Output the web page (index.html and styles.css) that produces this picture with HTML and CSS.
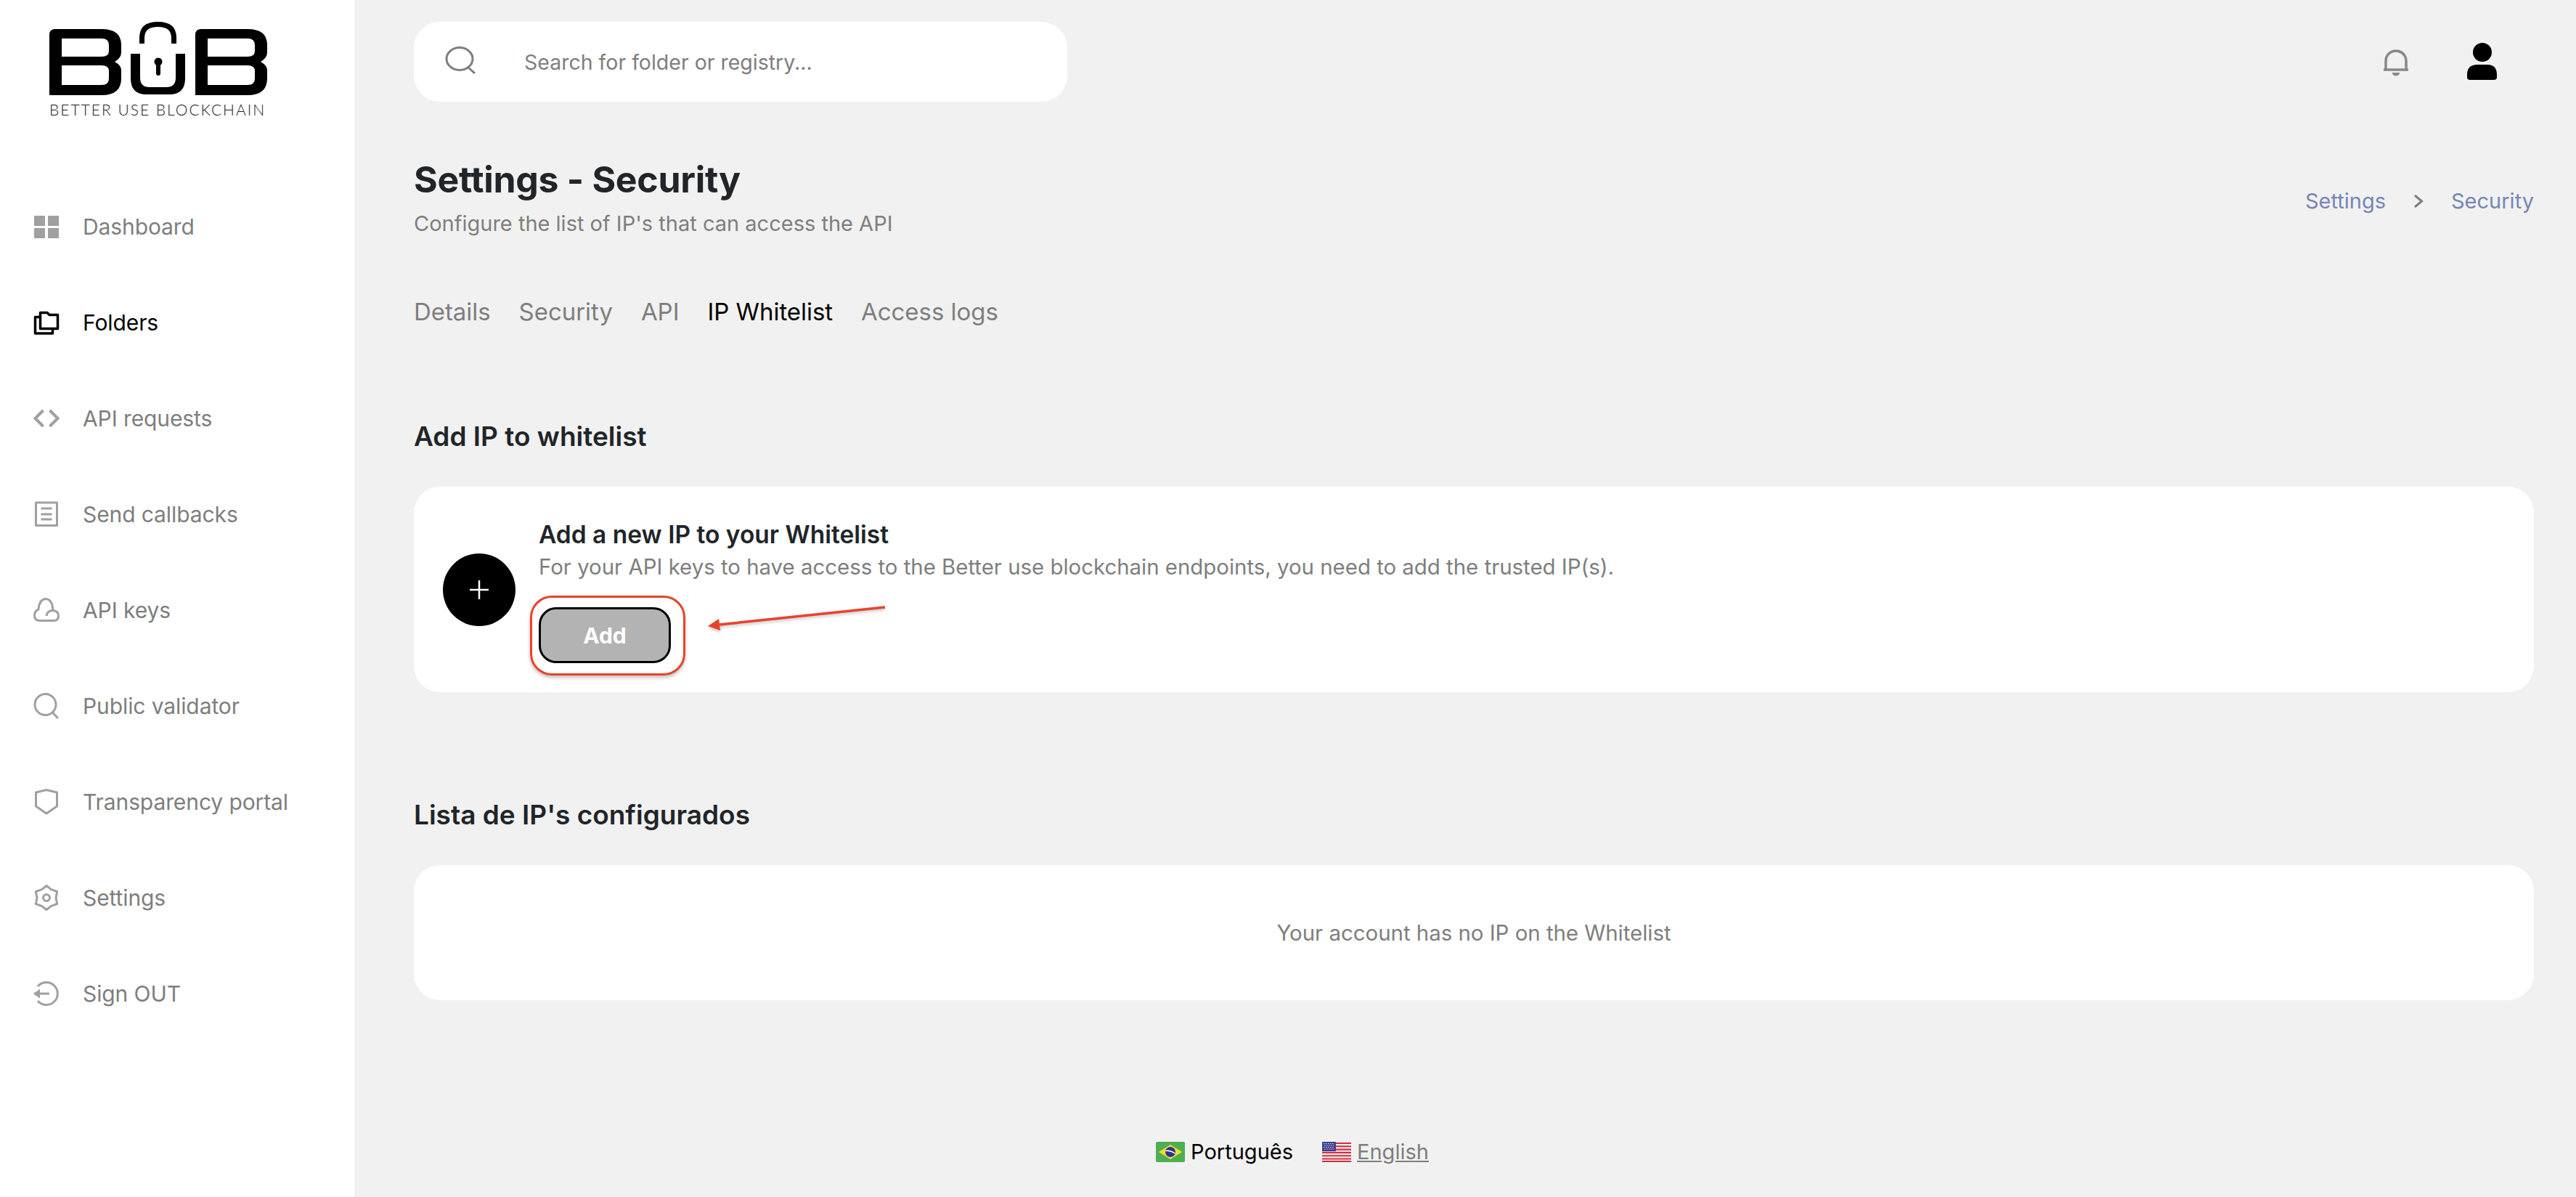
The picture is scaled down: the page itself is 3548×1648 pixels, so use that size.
FILE: index.html
```html
<!DOCTYPE html>
<html lang="en">
<head>
<meta charset="utf-8">
<title>Settings - Security</title>
<link rel="stylesheet" href="styles.css">
</head>
<body>
<div class="app">
  <aside class="sidebar">
    <div class="logo">
      <svg class="logo-mark" viewBox="68 28 300 104" width="300" height="104">
        <path fill-rule="evenodd" d="M68 131V48Q68 40 76 40H140Q167 40 167 62V72Q167 80 158 85Q167 90 167 97V108Q167 131 140 131ZM85 53V78H140Q150 78 150 70V62Q150 53 140 53ZM85 90V117H140Q150 117 150 108V98Q150 90 140 90Z"/>
        <path fill-rule="evenodd" d="M269 131V48Q269 40 277 40H341Q368 40 368 62V72Q368 80 359 85Q368 90 368 97V108Q368 131 341 131ZM286 53V78H341Q351 78 351 70V62Q351 53 341 53ZM286 90V117H341Q351 117 351 108V98Q351 90 341 90Z"/>
        <path d="M180 74H193V107Q193 120 206 120H229Q242 120 242 107V74H255V108Q255 130 233 130H202Q180 130 180 108Z"/>
        <path d="M195.500 60V52Q195.500 33.500 217.500 33.500Q239.500 33.500 239.500 52V60" fill="none" stroke="#000" stroke-width="7"/>
        <circle cx="218" cy="85" r="5.500"/>
        <path d="M218 85V101" stroke="#000" stroke-width="6" stroke-linecap="round"/>
      </svg>
      <div class="logo-text">BETTER USE BLOCKCHAIN</div>
    </div>
    <nav class="nav">
      <a class="nav-item"><svg class="nav-icon" viewBox="0 0 36 36"><path class="fill" d="M1 3H16V17H1ZM20 3H35V17H20ZM1 20H16V34H1ZM20 20H35V34H20Z"/></svg><span>Dashboard</span></a>
      <a class="nav-item active"><svg class="nav-icon" viewBox="0 0 36 36"><path class="line" d="M9.500 26.500V4.500H19L22 7.500H33.500V26.500ZM9.500 10.500H2.500V33H26.500V26.500"/></svg><span>Folders</span></a>
      <a class="nav-item"><svg class="nav-icon" viewBox="0 0 36 36"><path class="line wide" d="M13.500 7L2.500 18L13.500 29M22.500 7L33.500 18L22.500 29"/></svg><span>API requests</span></a>
      <a class="nav-item"><svg class="nav-icon" viewBox="0 0 36 36"><path class="line" d="M3.500 2H32.500V33.500H3.500ZM10.500 10H25.500M10.500 18H25.500M10.500 25H25.500"/></svg><span>Send callbacks</span></a>
      <a class="nav-item"><svg class="nav-icon" viewBox="0 0 36 36"><path class="line" d="M9 32.500H28Q34.500 32.500 34.500 26Q34.500 19 27 18.500Q26 3 17 2.500Q8 3 7 17Q1.500 19 1.500 25.500Q1.500 32.500 9 32.500ZM18 26Q19 18.500 27 18.500"/></svg><span>API keys</span></a>
      <a class="nav-item"><svg class="nav-icon" viewBox="0 0 36 36"><circle class="line" cx="16.500" cy="16" r="14.500"/><path class="line" d="M26 26.500L34 35"/></svg><span>Public validator</span></a>
      <a class="nav-item"><svg class="nav-icon" viewBox="0 0 36 36"><path class="line" d="M18 1.500L32.500 5V24L18 34L3.500 24V5Z"/></svg><span>Transparency portal</span></a>
      <a class="nav-item"><svg class="nav-icon" viewBox="0 0 36 36"><path class="line" d="M18 1.500L24.500 6.700L32.700 9.500L31 18L32.700 26.500L24.500 29.300L18 34.500L11.500 29.300L3.300 26.500L5 18L3.300 9.500L11.500 6.700Z"/><circle class="line" cx="18" cy="18" r="4.500"/></svg><span>Settings</span></a>
      <a class="nav-item"><svg class="nav-icon" viewBox="0 0 36 36"><path class="line" d="M6 8A15.500 15.500 0 1 1 6 28M1 18H22"/><path class="fill" d="M0 18L9 11.500V24.500Z"/></svg><span>Sign OUT</span></a>
    </nav>
  </aside>

  <main class="main">
    <header class="topbar">
      <div class="search">
        <svg class="search-icon" viewBox="0 0 42 38"><ellipse cx="20" cy="17" rx="18" ry="15.500" fill="none" stroke="#7e7e7e" stroke-width="3"/><path d="M31 28L41 37" stroke="#7e7e7e" stroke-width="3"/></svg>
        <span class="search-text">Search for folder or registry...</span>
      </div>
      <div class="top-icons">
        <svg class="bell" viewBox="0 0 36 38"><path d="M4 28V17A14 14 0 0 1 32 17V28" fill="none" stroke="#888" stroke-width="3.500"/><path d="M1 29H35" stroke="#888" stroke-width="3.500"/><path d="M12.500 33H23.500Q22 37.500 18 37.500Q14 37.500 12.500 33Z" fill="#888"/></svg>
        <svg class="user" viewBox="0 0 42 52"><circle cx="21" cy="13" r="13"/><path d="M0 44Q0 30 14 30H28Q41 30 41 44V47Q41 51 37 51H4Q0 51 0 47Z"/></svg>
      </div>
    </header>

    <section class="page-head">
      <div>
        <h1 class="page-title">Settings - Security</h1>
        <p class="page-sub">Configure the list of IP's that can access the API</p>
      </div>
      <div class="crumbs">
        <span>Settings</span>
        <svg class="crumb-sep" viewBox="0 0 14 20"><path d="M2 2L11.500 10L2 18" fill="none" stroke="#7e7e7e" stroke-width="3"/></svg>
        <span>Security</span>
      </div>
    </section>

    <div class="tabs">
      <a class="tab">Details</a>
      <a class="tab">Security</a>
      <a class="tab">API</a>
      <a class="tab active">IP Whitelist</a>
      <a class="tab">Access logs</a>
    </div>

    <h2 class="section-title first">Add IP to whitelist</h2>
    <section class="card add-card">
      <div class="plus">
        <svg viewBox="0 0 26 26" width="26" height="26"><path d="M13 0V26M0 13H26" stroke="#fff" stroke-width="2.500"/></svg>
      </div>
      <div class="add-body">
        <h3 class="add-title">Add a new IP to your Whitelist</h3>
        <p class="add-desc">For your API keys to have access to the Better use blockchain endpoints, you need to add the trusted IP(s).</p>
        <div class="highlight"><button class="add-btn">Add</button></div>
      </div>
      <svg class="arrow" viewBox="0 0 250 40" width="250" height="40"><path d="M248 3L20 27" stroke="#e8432a" stroke-width="3.500"/><path d="M4 29L19 19L21 35Z" fill="#e8432a"/></svg>
    </section>

    <h2 class="section-title second">Lista de IP's configurados</h2>
    <section class="card empty-card">Your account has no IP on the Whitelist</section>

    <footer class="langs">
      <a class="lang pt">
        <svg class="flag" viewBox="0 0 40 28"><rect width="40" height="28" rx="2" fill="#4caf50"/><path d="M20 4L36 14L20 24L4 14Z" fill="#fdd835"/><circle cx="20" cy="14" r="7" fill="#283593"/><path d="M13.500 12.500Q20 11.500 26.500 16" stroke="#fff" stroke-width="1.500" fill="none"/></svg>
        <span>Português</span>
      </a>
      <a class="lang en">
        <svg class="flag" viewBox="0 0 40 28"><rect width="40" height="28" rx="2" fill="#eceff1"/><path d="M0 2H40M0 6.300H40M0 10.600H40M0 14.900H40M0 19.200H40M0 23.500H40M0 27H40" stroke="#d32f3f" stroke-width="2.100"/><rect width="19" height="13" fill="#3f3f8f"/><path d="M2 2.500H17M3 5H16M2 7.500H17M3 10H16" stroke="#ddd" stroke-width="1.200" stroke-dasharray="1.500 1.500"/></svg>
        <span> English</span>
      </a>
    </footer>
  </main>
</div>
</body>
</html>
```
FILE: styles.css
```css
* { box-sizing: border-box; }
html, body { margin: 0; padding: 0; height: 100%; }
body { background: #f1f1f1; font-family: Inter, "Noto Sans", sans-serif; color: #7e7e7e; overflow: hidden; }
.app { display: flex; height: 1648px; }

.sidebar { width: 488px; flex: none; background: #fff; }
.logo { padding: 28px 0 0 68px; height: 246px; }
.logo-mark { display: block; }
.logo-text { margin-top: 6px; font-family: Lato, sans-serif; font-size: 21px; font-weight: 300; line-height: 26px; letter-spacing: 2px; color: #222; white-space: nowrap; }
.nav { display: flex; flex-direction: column; }
.nav-item { display: flex; align-items: center; height: 132px; padding-left: 46px; font-size: 30px; letter-spacing: -0.1px; color: #7e7e7e; }
.nav-item.active { color: #000; }
.nav-icon { width: 36px; height: 36px; margin-right: 32px; flex: none; overflow: visible; }
.fill { fill: #a0a0a0; }
.line { fill: none; stroke: #a0a0a0; stroke-width: 3; stroke-linejoin: round; }
.line.wide { stroke-width: 4; stroke-linejoin: miter; }
.active .line { stroke: #000; stroke-width: 3.500; }

.main { flex: 1; min-width: 0; padding: 30px 58px 0 82px; display: flex; flex-direction: column; }
.topbar { display: flex; justify-content: space-between; align-items: center; height: 110px; }
.search { width: 900px; height: 110px; background: #fff; border-radius: 36px; display: flex; align-items: center; padding-left: 43px; }
.search-icon { width: 42px; height: 38px; margin-right: 67px; margin-top: -4px; flex: none; }
.search-text { font-size: 28.500px; color: #7e7e7e; }
.top-icons { display: flex; align-items: center; gap: 80px; padding-right: 50px; }
.bell { width: 36px; height: 38px; margin-top: 2px; }
.user { width: 42px; height: 52px; }

.page-head { display: flex; justify-content: space-between; align-items: flex-start; margin-top: 74px; }
.page-title { margin: 0; font-size: 50px; line-height: 66px; font-weight: 700; letter-spacing: -0.3px; color: #212529; }
.page-sub { margin: 8px 0 0; font-size: 29px; line-height: 40px; color: #7e7e7e; }
.crumbs { display: flex; align-items: center; gap: 38px; margin-top: 43px; font-size: 29px; line-height: 40px; color: #7587b5; }
.crumb-sep { width: 14px; height: 20px; }

.tabs { display: flex; gap: 39px; margin-top: 79px; font-size: 33px; letter-spacing: -0.05px; line-height: 44px; color: #7e7e7e; }
.tab.active { color: #000; }

.section-title { margin: 0; font-size: 37px; line-height: 50px; font-weight: 600; color: #212529; }
.section-title.first { margin-top: 125px; }
.section-title.second { margin-top: 144px; }

.card { background: #fff; border-radius: 36px; }
.add-card { position: relative; display: flex; align-items: center; margin-top: 44px; padding: 24px 40px 23px; height: 283px; }
.plus { width: 100px; height: 100px; flex: none; border-radius: 50%; background: #000; display: flex; align-items: center; justify-content: center; margin-right: 32px; }
.add-body { padding-top: 20px; min-width: 0; }
.add-title { margin: 0; font-size: 33.500px; line-height: 42px; font-weight: 600; color: #212529; }
.add-desc { margin: 4px 0 0; font-size: 29.400px; line-height: 40px; color: #7e7e7e; white-space: nowrap; }
.highlight { width: 214px; height: 110px; margin: 19px 0 0 -12px; padding-left: 9px; border: 3px solid #e8432a; border-radius: 30px; box-shadow: 0 3px 5px rgba(0,0,0,.25); display: flex; align-items: center; }
.add-btn { width: 182px; height: 77px; padding: 0; background: #b3b3b3; border: 3px solid #000; border-radius: 24px; color: #fff; font: 700 30px Inter, sans-serif; }
.arrow { position: absolute; left: 401px; top: 163px; filter: drop-shadow(0 2px 2px rgba(0,0,0,.25)); }

.empty-card { margin-top: 44px; height: 186px; display: flex; align-items: center; justify-content: center; font-size: 29.400px; color: #7e7e7e; }

.langs { display: flex; justify-content: center; gap: 40px; margin-top: 189px; padding-right: 500px; font-size: 29px; line-height: 40px; }
.lang { display: flex; align-items: center; white-space: nowrap; }
.lang.pt { color: #000; gap: 8px; }
.lang.en { color: #7e7e7e; text-decoration: underline; }
.lang.en span { padding-left: 8px; }
.flag { width: 40px; height: 28px; flex: none; }
```
